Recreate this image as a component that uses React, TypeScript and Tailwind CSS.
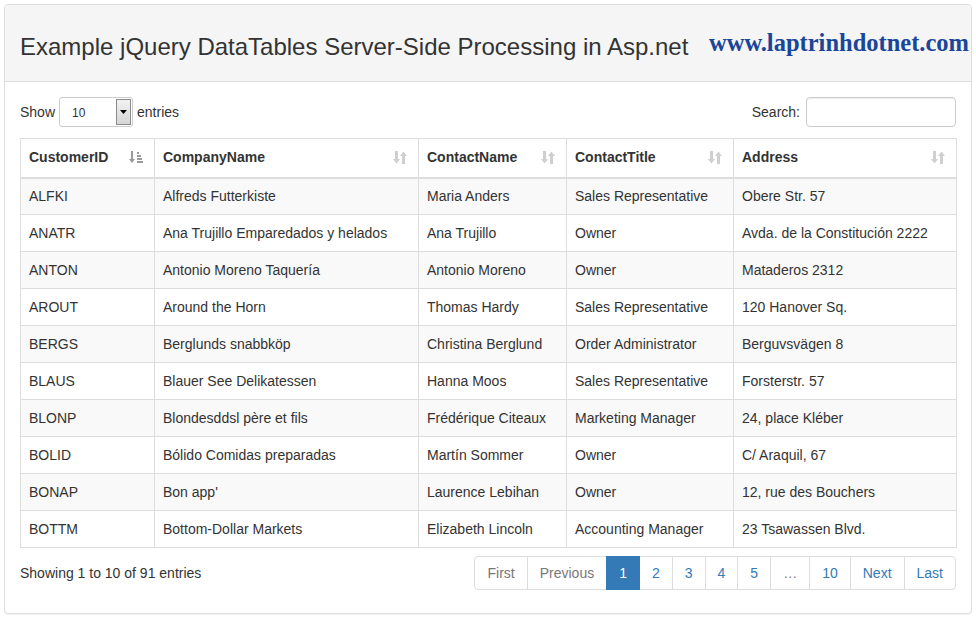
const rows: string[][] = [
  ['ALFKI', 'Alfreds Futterkiste', 'Maria Anders', 'Sales Representative', 'Obere Str. 57'],
  ['ANATR', 'Ana Trujillo Emparedados y helados', 'Ana Trujillo', 'Owner', 'Avda. de la Constitución 2222'],
  ['ANTON', 'Antonio Moreno Taquería', 'Antonio Moreno', 'Owner', 'Mataderos 2312'],
  ['AROUT', 'Around the Horn', 'Thomas Hardy', 'Sales Representative', '120 Hanover Sq.'],
  ['BERGS', 'Berglunds snabbköp', 'Christina Berglund', 'Order Administrator', 'Berguvsvägen 8'],
  ['BLAUS', 'Blauer See Delikatessen', 'Hanna Moos', 'Sales Representative', 'Forsterstr. 57'],
  ['BLONP', 'Blondesddsl père et fils', 'Frédérique Citeaux', 'Marketing Manager', '24, place Kléber'],
  ['BOLID', 'Bólido Comidas preparadas', 'Martín Sommer', 'Owner', 'C/ Araquil, 67'],
  ['BONAP', "Bon app'", 'Laurence Lebihan', 'Owner', '12, rue des Bouchers'],
  ['BOTTM', 'Bottom-Dollar Markets', 'Elizabeth Lincoln', 'Accounting Manager', '23 Tsawassen Blvd.'],
];

const columns = [
  { title: 'CustomerID', width: 'w-[134px]', sorted: true },
  { title: 'CompanyName', width: 'w-[264px]', sorted: false },
  { title: 'ContactName', width: 'w-[148px]', sorted: false },
  { title: 'ContactTitle', width: 'w-[167px]', sorted: false },
  { title: 'Address', width: 'w-[223px]', sorted: false },
];

function SortIcon({ sorted }: { sorted: boolean }): JSX.Element {
  if (sorted) {
    return (
      <svg width="14" height="13" viewBox="0 0 14 13" className="text-[#9a9a9a]" fill="currentColor">
        <rect x="2" y="0" width="2" height="9" />
        <path d="M0 8 H6 L3 12 Z" />
        <rect x="8" y="1" width="2" height="2" />
        <rect x="8" y="4" width="4" height="2" />
        <rect x="8" y="7" width="5" height="2" />
        <rect x="8" y="10" width="6" height="2" />
      </svg>
    );
  }
  return (
    <svg width="14" height="13" viewBox="0 0 14 13" className="text-[#cfcfcf]" fill="currentColor">
      <rect x="2" y="0" width="3" height="9" />
      <path d="M0 8 H7 L3.5 12.5 Z" />
      <rect x="9" y="4" width="3" height="9" />
      <path d="M7 5 H14 L10.5 0.5 Z" />
    </svg>
  );
}

const pages = [
  { label: 'First', kind: 'disabled' },
  { label: 'Previous', kind: 'disabled' },
  { label: '1', kind: 'active' },
  { label: '2', kind: 'link' },
  { label: '3', kind: 'link' },
  { label: '4', kind: 'link' },
  { label: '5', kind: 'link' },
  { label: '…', kind: 'disabled' },
  { label: '10', kind: 'link' },
  { label: 'Next', kind: 'link' },
  { label: 'Last', kind: 'link' },
];

export default function App(): JSX.Element {
  return (
    <div className="min-h-[619px] bg-white p-[4px] font-['Liberation_Sans',Arial,sans-serif] text-[14px] text-[#333]">
      <div className="w-[968px] rounded-[4px] border border-[#ddd] shadow-[0_1px_1px_rgba(0,0,0,0.05)]">
        <div className="flex h-[77px] items-center justify-between rounded-t-[3px] border-b border-[#ddd] bg-[#f5f5f5] pl-[15px] pr-[2px]">
          <h3 className="mt-[7px] text-[24px] leading-[26px] text-[#333]">
            Example jQuery DataTables Server-Side Processing in Asp.net
          </h3>
          <span className="mt-[-1px] font-['Liberation_Serif','Times_New_Roman',serif] text-[24.5px] font-bold leading-[26px] text-[#1a4699]">
            www.laptrinhdotnet.com
          </span>
        </div>

        <div className="px-[15px] pt-[15px] pb-[23px]">
          <div className="flex h-[30px] items-center justify-between">
            <label className="flex items-center gap-[4px]">
              Show
              <div className="flex h-[30px] w-[74px] items-stretch rounded-[3px] border border-[#ccc] bg-white">
                <span className="flex flex-1 items-center pl-[12px] pt-[2px] text-[12px]">10</span>
                <span className="m-[1px] flex w-[15px] items-center justify-center border border-[#8a8a8a] bg-gradient-to-b from-[#f2f2f2] to-[#d6d6d6]">
                  <svg width="7" height="4" viewBox="0 0 7 4" fill="#000">
                    <path d="M0 0 H7 L3.5 4 Z" />
                  </svg>
                </span>
              </div>
              entries
            </label>
            <label className="flex items-center gap-[6px]">
              Search:
              <input className="h-[30px] w-[150px] rounded-[4px] border border-[#ccc] bg-white shadow-[inset_0_1px_1px_rgba(0,0,0,0.075)] outline-none" />
            </label>
          </div>

          <table className="mt-[11px] w-[936px] table-fixed border-collapse border border-[#ddd]">
            <thead>
              <tr>
                {columns.map((c) => (
                  <th
                    key={c.title}
                    className={`${c.width} h-[39px] border border-b-2 border-[#ddd] px-[8px] text-left font-bold`}
                  >
                    <div className="flex items-center justify-between pr-[3px]">
                      <span>{c.title}</span>
                      <SortIcon sorted={c.sorted} />
                    </div>
                  </th>
                ))}
              </tr>
            </thead>
            <tbody>
              {rows.map((r, i) => (
                <tr key={r[0]} className={i % 2 === 0 ? 'bg-[#f9f9f9]' : 'bg-white'}>
                  {r.map((cell, j) => (
                    <td key={j} className="h-[37px] whitespace-nowrap border border-[#ddd] px-[8px] leading-[20px]">
                      {cell}
                    </td>
                  ))}
                </tr>
              ))}
            </tbody>
          </table>

          <div className="mt-[8px] flex items-center justify-between">
            <div className="pt-[1px]">Showing 1 to 10 of 91 entries</div>
            <ul className="flex">
              {pages.map((p, i) => (
                <li
                  key={p.label}
                  className={`-ml-px flex h-[34px] items-center border px-[12px] leading-[20px] ${
                    i === 0 ? 'ml-0 rounded-l-[4px]' : ''
                  } ${i === pages.length - 1 ? 'rounded-r-[4px]' : ''} ${
                    p.kind === 'active'
                      ? 'z-10 border-[#337ab7] bg-[#337ab7] text-white'
                      : p.kind === 'disabled'
                        ? 'border-[#ddd] bg-white text-[#777]'
                        : 'border-[#ddd] bg-white text-[#337ab7]'
                  }`}
                >
                  {p.label}
                </li>
              ))}
            </ul>
          </div>
        </div>
      </div>
    </div>
  );
}
